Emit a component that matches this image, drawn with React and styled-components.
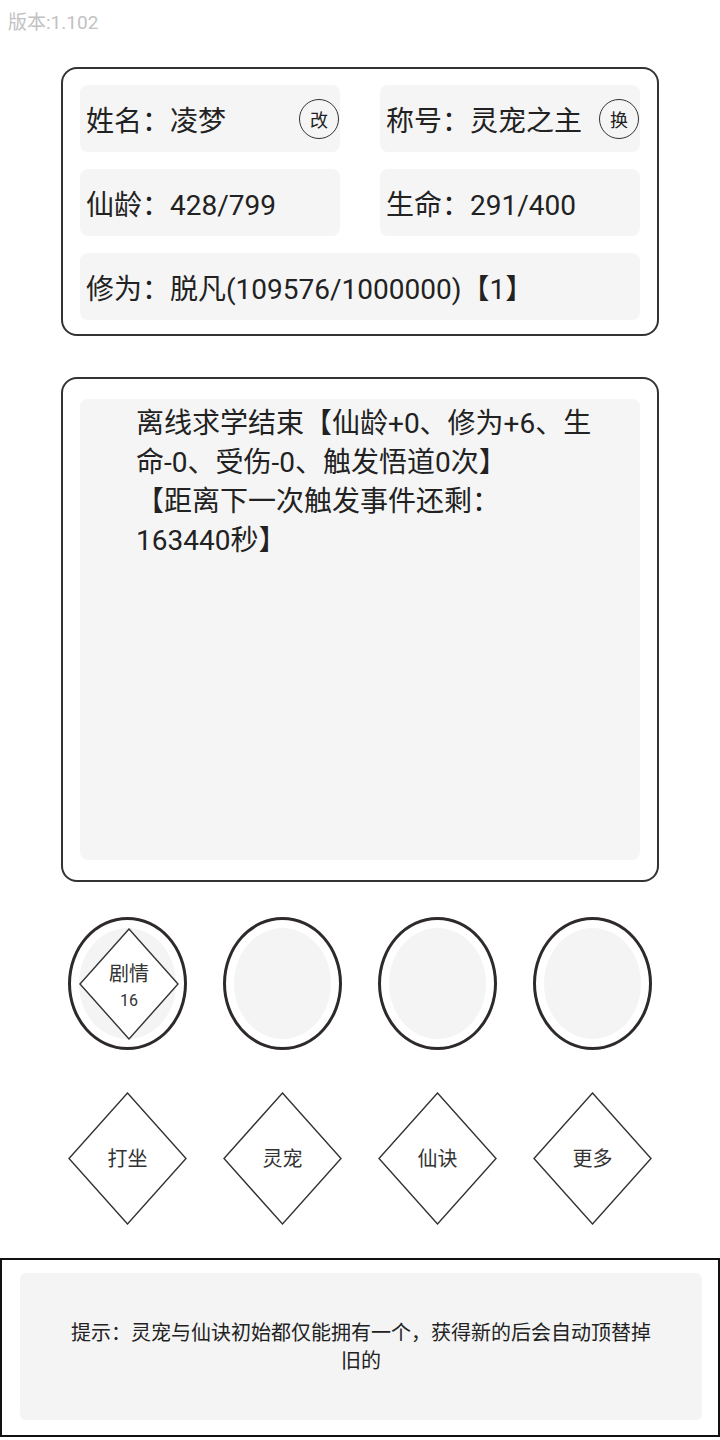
import React from 'react';
import styled, { createGlobalStyle } from 'styled-components';

const GlobalStyle = createGlobalStyle`
  html, body {
    margin: 0;
    padding: 0;
    background: #fff;
  }
  body {
    font-family: Roboto, "Noto Sans CJK SC", sans-serif;
    color: #222;
  }
`;

const Page = styled.div`
  width: 720px;
  min-height: 1440px;
  display: flex;
  flex-direction: column;
  align-items: center;
`;

const Version = styled.div`
  align-self: flex-start;
  padding: 9px 0 0 8px;
  height: 58px;
  box-sizing: border-box;
  font-size: 19px;
  line-height: 28px;
  color: #c2c2c2;
`;

const Card = styled.div`
  width: 598px;
  box-sizing: border-box;
  border: 2px solid #333;
  border-radius: 16px;
  padding: ${p => p.$pad};
  margin-top: ${p => p.$top}px;
`;

const InfoGrid = styled.div`
  display: grid;
  grid-template-columns: 1fr 1fr;
  column-gap: 40px;
  row-gap: 17px;
`;

const InfoItem = styled.div`
  grid-column: ${p => (p.$wide ? '1 / 3' : 'auto')};
  height: 67px;
  background: #f5f5f5;
  border-radius: 8px;
  display: flex;
  align-items: center;
  justify-content: space-between;
  padding: 0 1px 0 6px;
  font-size: 28px;
  white-space: nowrap;
`;

const RoundBtn = styled.div`
  width: 40px;
  height: 40px;
  box-sizing: border-box;
  border: 1.5px solid #333;
  border-radius: 50%;
  display: flex;
  align-items: center;
  justify-content: center;
  font-size: 18px;
  flex-shrink: 0;
`;

const LogArea = styled.div`
  height: 461px;
  background: #f5f5f5;
  border-radius: 8px;
  padding: 5px 36px 0 56px;
  box-sizing: border-box;
  font-size: 28px;
  line-height: 39px;
`;

const LogLine = styled.div``;

const NoWrap = styled.span`
  white-space: nowrap;
`;

const Row = styled.div`
  width: 584px;
  display: flex;
  justify-content: space-between;
  margin-top: ${p => p.$top}px;
`;

const Circle = styled.div`
  width: 119px;
  height: 133px;
  box-sizing: border-box;
  border: 3px solid #2e2a29;
  border-radius: 50%;
  padding: 8px;
`;

const CircleInner = styled.div`
  width: 100%;
  height: 100%;
  border-radius: 50%;
  background: #f4f4f5;
  display: grid;
`;

const Diamond = styled.div`
  width: ${p => p.$w}px;
  height: ${p => p.$h}px;
  display: grid;
  place-items: center;
  & > * {
    grid-area: 1 / 1;
  }
`;

const DiamondShape = styled.svg`
  width: 100%;
  height: 100%;
  display: block;
`;

const DiamondLabel = styled.div`
  display: flex;
  flex-direction: column;
  align-items: center;
  padding-top: ${p => p.$shift || 0}px;
  font-size: 20px;
  line-height: 26px;
  color: #333;
`;

const Count = styled.span`
  font-size: 16px;
  line-height: 28px;
`;

const TipBox = styled.div`
  width: 720px;
  margin-top: 33px;
  box-sizing: border-box;
  border: 2px solid #111;
  padding: 13px 16px 15px 18px;
`;

const TipInner = styled.div`
  height: 147px;
  background: #f4f4f4;
  border-radius: 6px;
  display: flex;
  align-items: center;
  justify-content: center;
  text-align: center;
  padding: 0 44px;
  font-size: 20px;
  line-height: 28px;
  color: #222;
`;

function DiamondButton({ w = 119, h = 133, shift, children }) {
  return (
    <Diamond $w={w} $h={h}>
      <DiamondShape viewBox={`0 0 ${w} ${h}`} preserveAspectRatio="none">
        <polygon
          points={`${w / 2},1 ${w - 1},${h / 2} ${w / 2},${h - 1} 1,${h / 2}`}
          fill="#fff"
          stroke="#333"
          strokeWidth="1.4"
        />
      </DiamondShape>
      <DiamondLabel $shift={shift}>{children}</DiamondLabel>
    </Diamond>
  );
}

export default function App() {
  const actions = ['打坐', '灵宠', '仙诀', '更多'];
  return (
    <Page>
      <GlobalStyle />
      <Version>版本:1.102</Version>

      <Card $top={9} $pad="16px 17px 14px">
        <InfoGrid>
          <InfoItem>
            <span>姓名：凌梦</span>
            <RoundBtn>改</RoundBtn>
          </InfoItem>
          <InfoItem>
            <span>称号：灵宠之主</span>
            <RoundBtn>换</RoundBtn>
          </InfoItem>
          <InfoItem>
            <span>仙龄：428/799</span>
          </InfoItem>
          <InfoItem>
            <span>生命：291/400</span>
          </InfoItem>
          <InfoItem $wide>
            <span>修为：脱凡(109576/1000000)【1】</span>
          </InfoItem>
        </InfoGrid>
      </Card>

      <Card $top={41} $pad="20px 17px 20px">
        <LogArea>
          <LogLine>离线求学结束【仙龄+0、修为+6、生命-0、受伤-0、触发悟道0次】</LogLine>
          <LogLine>
            【距离下一次触发事件还剩：<NoWrap>163440秒】</NoWrap>
          </LogLine>
        </LogArea>
      </Card>

      <Row $top={35}>
        <Circle>
          <CircleInner>
            <DiamondButton w={100} h={112} shift={8}>
              剧情
              <Count>16</Count>
            </DiamondButton>
          </CircleInner>
        </Circle>
        <Circle><CircleInner /></Circle>
        <Circle><CircleInner /></Circle>
        <Circle><CircleInner /></Circle>
      </Row>

      <Row $top={42}>
        {actions.map(a => (
          <DiamondButton key={a}>{a}</DiamondButton>
        ))}
      </Row>

      <TipBox>
        <TipInner>提示：灵宠与仙诀初始都仅能拥有一个，获得新的后会自动顶替掉旧的</TipInner>
      </TipBox>
    </Page>
  );
}
